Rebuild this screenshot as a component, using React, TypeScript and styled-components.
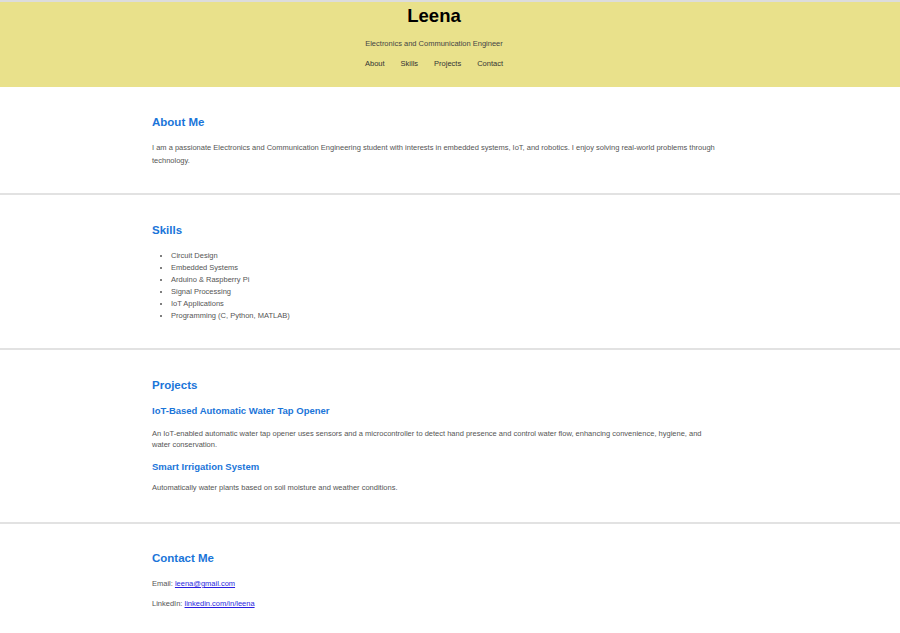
import styled, { createGlobalStyle } from 'styled-components';

const GlobalStyle = createGlobalStyle`
  html, body {
    margin: 0;
    padding: 0;
    background: #ffffff;
  }
  body {
    font-family: "Liberation Sans", Arial, sans-serif;
    color: #555;
  }
`;

const Page = styled.div`
  border-top: 2px solid #dcdcdc;
`;

const Header = styled.header`
  background-color: #e9e18b;
  height: 85px;
  text-align: center;
  box-sizing: border-box;
  padding: 4px 32px 0 0;
`;

const Title = styled.h1`
  margin: 0;
  font-size: 18.5px;
  line-height: 20px;
  font-weight: 700;
  color: #000;
`;

const Subtitle = styled.p`
  margin: 13px 0 0;
  font-size: 7.5px;
  line-height: 10px;
  color: #444;
`;

const Nav = styled.nav`
  display: flex;
  justify-content: center;
  gap: 16px;
  margin-top: 10px;
`;

const NavLink = styled.a`
  font-size: 7.5px;
  line-height: 10px;
  color: #333;
  text-decoration: none;
`;

const Section = styled.section<{ $last?: boolean; $pt?: number; $pb?: number }>`
  padding: ${(p) => p.$pt ?? 28}px 152px ${(p) => p.$pb ?? 26}px;
  border-bottom: ${(p) => (p.$last ? 'none' : '2px solid #e2e2e2')};
`;

const Content = styled.div`
  max-width: 567px;
`;

const Heading = styled.h2<{ $mb?: number }>`
  margin: 0 0 ${(p) => p.$mb ?? 12}px;
  font-size: 11.5px;
  line-height: 14px;
  font-weight: 700;
  color: #1a75d9;
`;

const Text = styled.p<{ $lh?: number }>`
  margin: 0;
  font-size: 7.5px;
  line-height: ${(p) => p.$lh ?? 13}px;
  color: #555;
`;

const SkillList = styled.ul`
  margin: 0;
  padding-left: 19px;
  list-style: disc;
`;

const SkillItem = styled.li`
  font-size: 7.5px;
  line-height: 12px;
  color: #555;
`;

const Project = styled.div`
  margin-top: 13px;
  & + & {
    margin-top: 11px;
  }
`;

const ProjectTitle = styled.h3<{ $mb: number }>`
  margin: 0 0 ${(p) => p.$mb}px;
  font-size: 9.5px;
  line-height: 12px;
  font-weight: 700;
  color: #1a75d9;
`;

const ContactLine = styled.p`
  margin: 0 0 8px;
  font-size: 7.5px;
  line-height: 12px;
  color: #555;
`;

const Link = styled.a`
  color: #2a1fe0;
`;

const skills = [
  'Circuit Design',
  'Embedded Systems',
  'Arduino & Raspberry Pi',
  'Signal Processing',
  'IoT Applications',
  'Programming (C, Python, MATLAB)',
];

const projects = [
  {
    title: 'IoT-Based Automatic Water Tap Opener',
    text: 'An IoT-enabled automatic water tap opener uses sensors and a microcontroller to detect hand presence and control water flow, enhancing convenience, hygiene, and water conservation.',
    gap: 11,
  },
  {
    title: 'Smart Irrigation System',
    text: 'Automatically water plants based on soil moisture and weather conditions.',
    gap: 9,
  },
];

export default function App() {
  return (
    <Page>
      <GlobalStyle />
      <Header>
        <Title>Leena</Title>
        <Subtitle>Electronics and Communication Engineer</Subtitle>
        <Nav>
          <NavLink href="#about">About</NavLink>
          <NavLink href="#skills">Skills</NavLink>
          <NavLink href="#projects">Projects</NavLink>
          <NavLink href="#contact">Contact</NavLink>
        </Nav>
      </Header>

      <Section id="about">
        <Content>
          <Heading>About Me</Heading>
          <Text>
            I am a passionate Electronics and Communication Engineering student with interests in
            embedded systems, IoT, and robotics. I enjoy solving real-world problems through
            technology.
          </Text>
        </Content>
      </Section>

      <Section id="skills">
        <Content>
          <Heading $mb={13}>Skills</Heading>
          <SkillList>
            {skills.map((s) => (
              <SkillItem key={s}>{s}</SkillItem>
            ))}
          </SkillList>
        </Content>
      </Section>

      <Section id="projects" $pb={29}>
        <Content>
          <Heading>Projects</Heading>
          {projects.map((p) => (
            <Project key={p.title}>
              <ProjectTitle $mb={p.gap}>{p.title}</ProjectTitle>
              <Text $lh={11}>{p.text}</Text>
            </Project>
          ))}
        </Content>
      </Section>

      <Section id="contact" $pt={27} $last>
        <Content>
          <Heading $mb={13}>Contact Me</Heading>
          <ContactLine>
            Email: <Link href="mailto:leena@gmail.com">leena@gmail.com</Link>
          </ContactLine>
          <ContactLine>
            LinkedIn: <Link href="#">linkedin.com/in/leena</Link>
          </ContactLine>
        </Content>
      </Section>
    </Page>
  );
}
